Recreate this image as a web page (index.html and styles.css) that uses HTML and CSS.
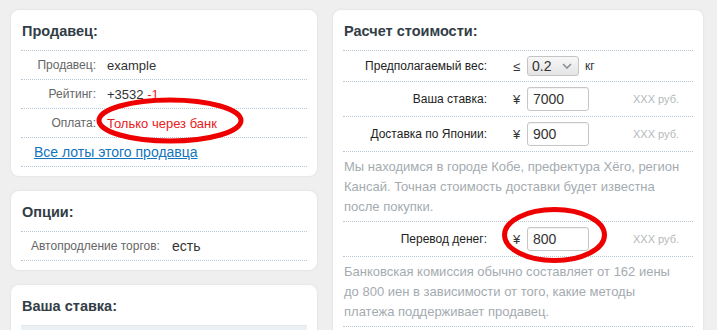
FILE: index.html
```html
<!DOCTYPE html>
<html lang="ru">
<head>
    <meta charset="UTF-8">
    <meta name="viewport" content="width=device-width, initial-scale=1.0">
    <title>Лот</title>
    <link rel="stylesheet" href="styles.css">
</head>
<body>
    <div class="page">
        <div class="col-left">
            <div class="card">
                <h2>Продавец:</h2>
                <div class="info">
                    <div class="row"><span class="lbl">Продавец:</span><span class="val">example</span></div>
                    <div class="row"><span class="lbl">Рейтинг:</span><span class="val">+3532 <span class="neg">-1</span></span></div>
                    <div class="row"><span class="lbl">Оплата:</span><span class="val red">Только через банк</span></div>
                    <div class="row link-row"><a href="#">Все лоты этого продавца</a></div>
                </div>
            </div>

            <div class="card">
                <h2>Опции:</h2>
                <div class="info">
                    <div class="row"><span class="lbl lbl-auto">Автопродление торгов:</span><span class="val big">есть</span></div>
                </div>
            </div>

            <div class="card">
                <h2>Ваша ставка:</h2>
                <div class="bid-box"></div>
            </div>
        </div>

        <div class="col-right">
            <div class="card">
                <h2>Расчет стоимости:</h2>
                <div class="calc">
                    <div class="calc-row">
                        <span class="clbl">Предполагаемый вес:</span>
                        <span class="sym">≤</span>
                        <div class="fake-select">0.2
                            <svg width="10" height="6" viewBox="0 0 10 6"><path d="M1 1l4 4 4-4" fill="none" stroke="#8a9096" stroke-width="1.6"/></svg>
                        </div>
                        <span class="unit">кг</span>
                    </div>
                    <div class="calc-row">
                        <span class="clbl">Ваша ставка:</span>
                        <span class="sym">¥</span>
                        <input class="num" type="text" value="7000">
                        <span class="rub">XXX руб.</span>
                    </div>
                    <div class="calc-row">
                        <span class="clbl">Доставка по Японии:</span>
                        <span class="sym">¥</span>
                        <input class="num" type="text" value="900">
                        <span class="rub">XXX руб.</span>
                    </div>
                    <p class="note">Мы находимся в городе Кобе, префектура Хёго, регион Кансай. Точная стоимость доставки будет известна после покупки.</p>
                    <div class="calc-row">
                        <span class="clbl">Перевод денег:</span>
                        <span class="sym">¥</span>
                        <input class="num" type="text" value="800">
                        <span class="rub">XXX руб.</span>
                    </div>
                    <p class="note">Банковская комиссия обычно составляет от 162 иены до 800 иен в зависимости от того, какие методы платежа поддерживает продавец.</p>
                    <div class="calc-row">
                        <span class="clbl"></span>
                        <span class="sym"></span>
                        <input class="num" type="text" value="">
                    </div>
                </div>
            </div>
        </div>

        <!-- пометки поверх скриншота -->
        <svg class="mark mark-pay" width="148" height="47" viewBox="0 0 148 47"><ellipse cx="74" cy="23.5" rx="71" ry="20.5" fill="none" stroke="#ee0000" stroke-width="5"/></svg>
        <svg class="mark mark-transfer" width="105" height="56" viewBox="0 0 105 56"><ellipse cx="52.5" cy="28" rx="50" ry="25.5" fill="none" stroke="#ee0000" stroke-width="5"/></svg>
    </div>
</body>
</html>
```

FILE: styles.css
```css
*{
    margin: 0;
    padding: 0;
    box-sizing: border-box;
}
body{
    background-color: #efefef;
    font-family: "Liberation Sans", Arial, sans-serif;
    color: #333;
    overflow: hidden;
}
.page{
    position: relative;
    display: flex;
    gap: 16px;
    padding: 10px 0 0 11px;
}
.col-left{
    width: 306px;
    display: flex;
    flex-direction: column;
    gap: 15px;
}
.col-right{
    width: 370px;
}
.card{
    background-color: #fff;
    border-radius: 8px;
    padding: 12px 10px 9px 10px;
    box-shadow: 0 0 3px rgba(0, 0, 0, 0.08);
}
h2{
    font-size: 14.5px;
    line-height: 18px;
    font-weight: bold;
    color: #323d46;
    margin: 0 0 10px 1px;
}
.info{
    border-bottom: 1px dotted #b7c7d3;
}
.row{
    display: flex;
    align-items: center;
    height: 29px;
    border-top: 1px dotted #b7c7d3;
}
.lbl{
    width: 75px;
    text-align: right;
    font-size: 12px;
    color: #666;
}
.lbl-auto{
    width: auto;
    padding-left: 10px;
}
.val{
    margin-left: 11px;
    font-size: 13px;
    color: #333;
}
.val.big{
    font-size: 14px;
    margin-left: 12px;
}
.neg, .red{
    color: #e8201c;
}
.link-row{
    padding-left: 13px;
}
.link-row a{
    font-size: 14px;
    color: #1474bd;
}
.bid-box{
    height: 40px;
    background-color: #ebf0f4;
    border-top: 1px solid #e2e8ed;
}
.calc{
    border-bottom: 1px dotted #b7c7d3;
}
.calc-row{
    display: flex;
    align-items: center;
    padding: 5px 0;
    border-top: 1px dotted #b7c7d3;
}
.clbl{
    width: 144px;
    text-align: right;
    font-size: 12px;
    color: #222;
}
.sym{
    width: 14px;
    margin-left: 26px;
    font-size: 13px;
    color: #333;
}
.fake-select{
    width: 52px;
    height: 20px;
    border: 1px solid #c4c4c4;
    border-radius: 3px;
    background: linear-gradient(#f7f7f7, #e4e4e4);
    font-size: 14px;
    line-height: 18px;
    padding-left: 4px;
    color: #333;
    display: flex;
    align-items: center;
    justify-content: space-between;
    padding-right: 6px;
}
.unit{
    margin-left: 6px;
    font-size: 12px;
}
.num{
    width: 62px;
    height: 24px;
    border: 1px solid #c6c6c6;
    border-radius: 3px;
    font-family: "Liberation Sans", Arial, sans-serif;
    font-size: 14px;
    color: #333;
    padding-left: 5px;
    box-shadow: inset 0 1px 1px rgba(0, 0, 0, 0.05);
}
.rub{
    margin-left: 44px;
    font-size: 11px;
    color: #b3b8bb;
}
.note{
    border-top: 1px dotted #b7c7d3;
    padding: 5px 10px 4px 1px;
    font-size: 13px;
    line-height: 20px;
    color: #a4abb0;
}
.mark{
    position: absolute;
}
.mark-pay{
    left: 96px;
    top: 97px;
}
.mark-transfer{
    left: 502px;
    top: 207px;
}
```
